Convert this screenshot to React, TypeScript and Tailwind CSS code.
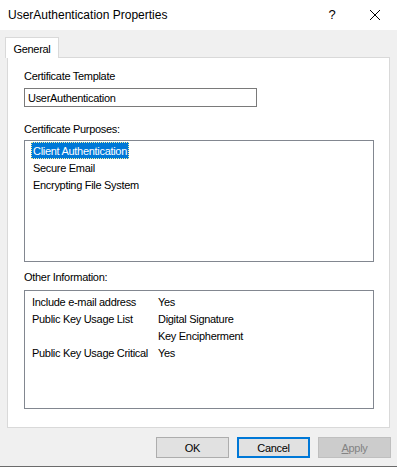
import React from "react";

const purposes = ["Client Authentication", "Secure Email", "Encrypting File System"];

const info: [string, string][] = [
  ["Include e-mail address", "Yes"],
  ["Public Key Usage List", "Digital Signature"],
  ["", "Key Encipherment"],
  ["Public Key Usage Critical", "Yes"],
];

export default function App() {
  return (
    <div
      className="w-[397px] h-[467px] bg-[#f0f0f0] flex flex-col border-b border-[#6b6b6b] text-black text-[11px] leading-[14px] tracking-[-0.3px] overflow-hidden"
      style={{ fontFamily: '"Liberation Sans", Arial, sans-serif' }}
    >
      {/* TITLE BAR */}
      <div className="h-[30px] bg-white flex items-center pl-[8px] shrink-0 tracking-normal">
        <span className="text-[12px] flex-1">UserAuthentication Properties</span>
        <span className="text-[13px] w-[20px] text-center mr-[27px]">?</span>
        <svg width="12" height="12" viewBox="0 0 12 12" className="mr-[16px]">
          <path d="M1 1 L11 11 M11 1 L1 11" stroke="#000" strokeWidth="1" />
        </svg>
      </div>

      {/* TAB */}
      <div className="pt-[7px] pl-[5px] flex">
        <div className="relative z-10 h-[21px] w-[54px] bg-white border border-b-0 border-[#d9d9d9] flex items-center justify-center pt-[1px]">
          General
        </div>
      </div>

      {/* PANEL */}
      <div className="mx-[7px] -mt-[1px] h-[371px] bg-white border border-[#d9d9d9] pl-[16px] pr-[15px] pt-[11px] flex flex-col">
        <div>Certificate Template</div>
        <div className="mt-[5px] w-[233px] h-[19px] border border-[#7a7a7a] flex items-center pl-[3px]">
          UserAuthentication
        </div>

        <div className="mt-[15px]">Certificate Purposes:</div>
        <div className="mt-[4px] h-[122px] border border-[#828790] pt-[1px] pl-[6px] flex flex-col">
          {purposes.map((p, i) => (
            <div key={p} className="h-[17px] flex items-center">
              {i === 0 ? (
                <span className="bg-[#0078d7] text-white px-[1px] h-[17px] flex items-center border border-dotted border-[#f5f5a0]">
                  {p}
                </span>
              ) : (
                <span className="px-[2px]">{p}</span>
              )}
            </div>
          ))}
        </div>

        <div className="mt-[8px]">Other Information:</div>
        <div className="mt-[6px] h-[119px] border border-[#828790] pt-[2px] pl-[7px] flex flex-col">
          {info.map(([k, v], i) => (
            <div key={i} className="h-[17px] flex items-center">
              <span className="w-[126px]">{k}</span>
              <span>{v}</span>
            </div>
          ))}
        </div>
      </div>

      {/* BUTTONS */}
      <div className="mt-[9px] pr-[6px] flex justify-end gap-[8px]">
        <button className="w-[73px] h-[21px] bg-[#e1e1e1] border border-[#adadad] text-[11px]">OK</button>
        <button className="w-[73px] h-[21px] bg-[#e1e1e1] border-2 border-[#0078d7] text-[11px]">Cancel</button>
        <button className="w-[73px] h-[21px] bg-[#cccccc] border border-[#bfbfbf] text-[#838383] text-[11px]">
          <span className="underline">A</span>pply
        </button>
      </div>
    </div>
  );
}
